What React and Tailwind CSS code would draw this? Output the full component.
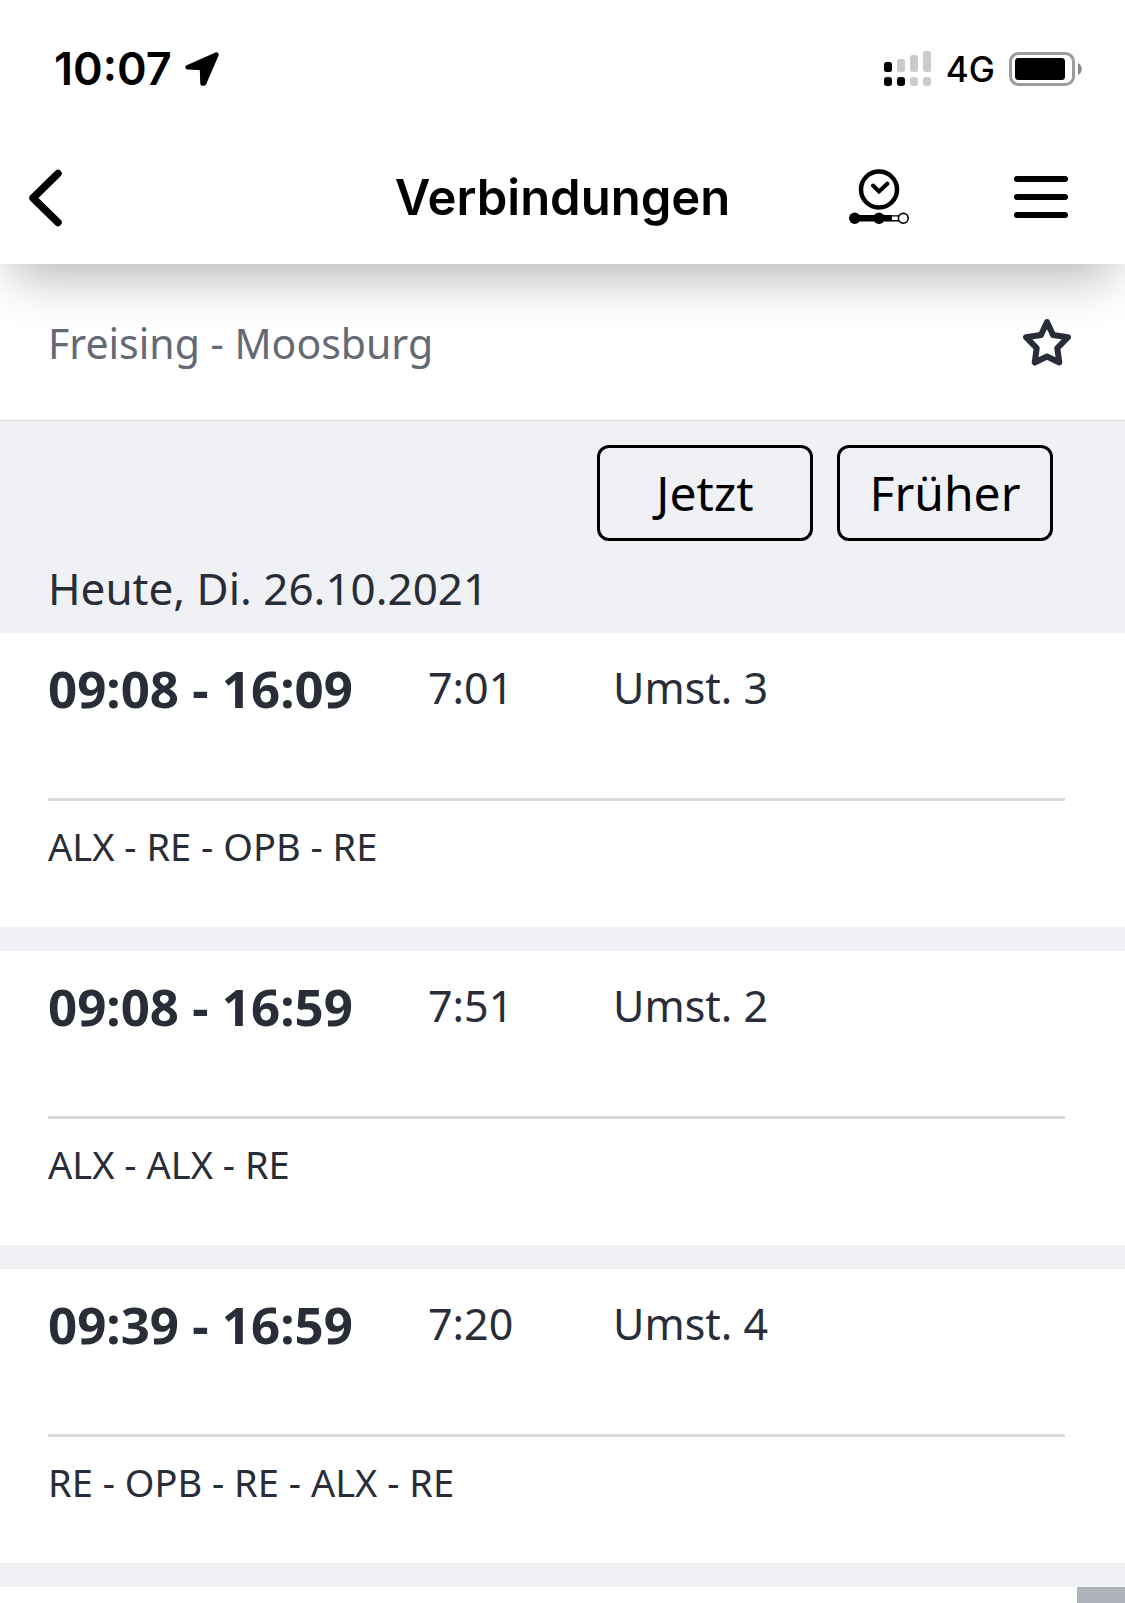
import React, { useState } from 'react';

const connections = [
  { time: '09:08 - 16:09', duration: '7:01', changes: 3, products: 'ALX - RE - OPB - RE' },
  { time: '09:08 - 16:59', duration: '7:51', changes: 2, products: 'ALX - ALX - RE' },
  { time: '09:39 - 16:59', duration: '7:20', changes: 4, products: 'RE - OPB - RE - ALX - RE' },
];

const LocationIcon = () => (
  <svg className="w-9 h-9" viewBox="0 0 36 36" aria-hidden="true">
    <path
      d="M32.5 3.5 L3.5 16.2 L18 17 L18.5 32.5 L20 32.5 Z"
      stroke="#000"
      strokeWidth="4.5"
      strokeLinejoin="round"
    />
  </svg>
);

// two SIM cards: bars for the first, dots for the second
const SignalIcon = () => (
  <svg className="w-12 h-9" viewBox="0 0 48 36" aria-hidden="true">
    <rect x="0" y="11" width="8" height="10" rx="2.5" />
    <rect x="13" y="8" width="8" height="13" rx="2.5" fill="#cbcbcb" />
    <rect x="26" y="4" width="8" height="17" rx="2.5" fill="#cbcbcb" />
    <rect x="39" y="0" width="8" height="21" rx="2.5" fill="#cbcbcb" />
    <rect x="0" y="26" width="8" height="9" rx="3" />
    <rect x="13" y="26" width="8" height="9" rx="3" />
    <rect x="26" y="26" width="8" height="9" rx="3" fill="#cbcbcb" />
    <rect x="39" y="26" width="8" height="9" rx="3" fill="#cbcbcb" />
  </svg>
);

const BatteryIcon = () => (
  <svg className="w-[74px] h-9" viewBox="0 0 74 36" aria-hidden="true">
    <rect x="1.5" y="2.5" width="63" height="31" rx="8" fill="none" stroke="#9c9c9c" strokeWidth="3" />
    <rect x="6" y="7" width="50" height="22" rx="3.5" />
    <path d="M69 12 C74 14 74 22 69 24 Z" fill="#8a8a8a" />
  </svg>
);

const BackIcon = () => (
  <svg className="w-[34px] h-[58px]" viewBox="0 0 34 58" fill="none" aria-hidden="true">
    <path d="M30 4.5 L5 29 L30 53.5" stroke="#000" strokeWidth="7.5" strokeLinecap="round" strokeLinejoin="round" />
  </svg>
);

const TripIcon = () => (
  <svg className="w-[60px] h-14" viewBox="0 0 60 56" fill="none" stroke="#000" aria-hidden="true">
    <circle cx="30" cy="20.5" r="18" strokeWidth="4.5" />
    <path d="M24 16.5 L30 22.5 L38.5 14.5" strokeWidth="4" strokeLinecap="round" />
    <path d="M5 49.3 H43" strokeWidth="6.5" />
    <path d="M42 46.9 H50 M42 51.7 H50" strokeWidth="1.4" />
    <circle cx="5.7" cy="49.3" r="5.7" fill="#000" stroke="none" />
    <circle cx="30" cy="49.3" r="5.7" fill="#000" stroke="none" />
    <circle cx="54.3" cy="49.3" r="4.9" fill="#fff" strokeWidth="1.6" />
  </svg>
);

const MenuIcon = () => (
  <svg className="w-[54px] h-[42px]" viewBox="0 0 54 42" aria-hidden="true">
    <path d="M3 3 H51 M3 21 H51 M3 39 H51" stroke="#000" strokeWidth="6" strokeLinecap="round" />
  </svg>
);

const StarIcon = ({ filled }) => (
  <svg className="w-12 h-12" viewBox="0 0 48 48" aria-hidden="true">
    <path
      d="M24 4 L30 17 L45 19.2 L34.3 30.2 L36.3 44.5 L24 38.5 L11.7 44.5 L13.7 30.2 L3 19.2 L18 17 Z"
      fill={filled ? '#282d37' : 'none'}
      stroke="#282d37"
      strokeWidth="6"
      strokeLinejoin="round"
    />
  </svg>
);

const Connection = ({ time, duration, changes, products }) => (
  <li className="bg-white pl-12 pr-[60px]">
    <div className="grid grid-cols-[380px_185px_1fr] items-center pt-6 pb-[79px] leading-[62px] text-[43px]">
      <span className="text-[51px] font-bold">{time}</span>
      <span>{duration}</span>
      <span>Umst. {changes}</span>
    </div>
    <p className="border-t-3 border-[#d7dade] pt-5 pb-14 text-[38px] leading-[50px]">{products}</p>
  </li>
);

const App = () => {
  const [favourite, setFavourite] = useState(false);

  return (
    <div className="min-h-screen flex flex-col bg-[#f0f1f5] text-[#282d37] font-['Noto_Sans',sans-serif]">
      <header className="relative z-10 bg-white text-black font-['Inter',sans-serif] shadow-[0_24px_48px_-12px_rgba(0,0,0,0.3)]">
        <div className="h-[132px] pt-1.5 pl-[54px] pr-[42px] flex items-center justify-between">
          <div className="flex items-center gap-3">
            <span className="text-[45px] font-semibold">10:07</span>
            <LocationIcon />
          </div>
          <div className="flex items-center gap-[14px]">
            <SignalIcon />
            <span className="text-[35px] font-medium">4G</span>
            <BatteryIcon />
          </div>
        </div>

        <div className="h-[132px] grid grid-cols-[1fr_auto_1fr] items-center">
          <button type="button" aria-label="Zurück" className="pl-7 justify-self-start">
            <BackIcon />
          </button>
          <h1 className="text-[49px] font-semibold">Verbindungen</h1>
          <div className="pb-0.5 pr-[57px] flex items-center justify-end gap-[105px]">
            <button type="button" aria-label="Meine Reise">
              <TripIcon />
            </button>
            <button type="button" aria-label="Menü">
              <MenuIcon />
            </button>
          </div>
        </div>
      </header>

      <div className="h-[157px] pl-12 pr-[54px] flex items-center justify-between bg-white border-b border-[#d7dade]">
        <h2 className="pt-0.5 text-[41px] leading-[60px] text-[#646973]">Freising - Moosburg</h2>
        <button
          type="button"
          aria-label="Favorit"
          aria-pressed={favourite}
          onClick={() => setFavourite(!favourite)}
        >
          <StarIcon filled={favourite} />
        </button>
      </div>

      <main className="grow flex flex-col">
        <div className="pt-6 pb-[14px]">
          <div className="pr-[72px] flex justify-end gap-6 text-black text-[48px]">
            <button type="button" className="w-[216px] h-24 border-3 border-black rounded-xl">
              Jetzt
            </button>
            <button type="button" className="w-[216px] h-24 border-3 border-black rounded-xl">
              Früher
            </button>
          </div>
          <p className="mt-4 pl-12 text-[44px] leading-[62px]">Heute, Di. 26.10.2021</p>
        </div>

        <ul className="flex flex-col gap-6">
          {connections.map((c) => (
            <Connection key={c.time} {...c} />
          ))}
        </ul>

        {/* start of the next card, with the scroll handle at its right */}
        <div className="mt-6 min-h-4 grow flex justify-end bg-white">
          <div className="w-12 bg-[#afb4bb]" />
        </div>
      </main>
    </div>
  );
};

export default App;
